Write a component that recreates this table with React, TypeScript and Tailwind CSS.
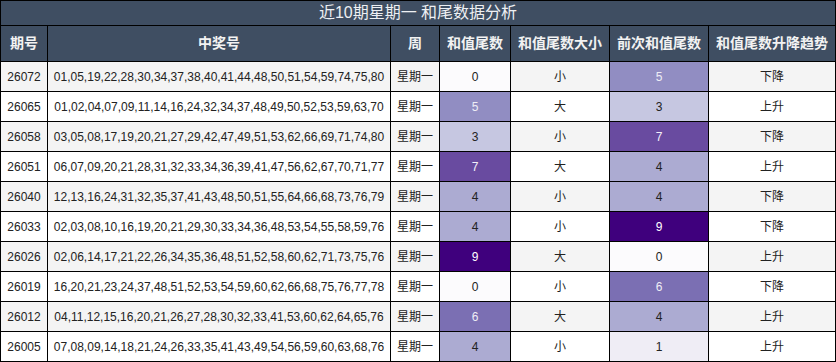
import React from "react";

// 近10期星期一 和值尾数 heatmap table

interface Row {
    issue: string;
    nums: string;
    tail: number;
    size: string;
    prev: number;
    trend: string;
}

const ROWS: Row[] = [
    { issue: "26072", nums: "01,05,19,22,28,30,34,37,38,40,41,44,48,50,51,54,59,74,75,80", tail: 0, size: "小", prev: 5, trend: "下降" },
    { issue: "26065", nums: "01,02,04,07,09,11,14,16,24,32,34,37,48,49,50,52,53,59,63,70", tail: 5, size: "大", prev: 3, trend: "上升" },
    { issue: "26058", nums: "03,05,08,17,19,20,21,27,29,42,47,49,51,53,62,66,69,71,74,80", tail: 3, size: "小", prev: 7, trend: "下降" },
    { issue: "26051", nums: "06,07,09,20,21,28,31,32,33,34,36,39,41,47,56,62,67,70,71,77", tail: 7, size: "大", prev: 4, trend: "上升" },
    { issue: "26040", nums: "12,13,16,24,31,32,35,37,41,43,48,50,51,55,64,66,68,73,76,79", tail: 4, size: "小", prev: 4, trend: "下降" },
    { issue: "26033", nums: "02,03,08,10,16,19,20,21,29,30,33,34,36,48,53,54,55,58,59,76", tail: 4, size: "小", prev: 9, trend: "下降" },
    { issue: "26026", nums: "02,06,14,17,21,22,26,34,35,36,48,51,52,58,60,62,71,73,75,76", tail: 9, size: "大", prev: 0, trend: "上升" },
    { issue: "26019", nums: "16,20,21,23,24,37,48,51,52,53,54,59,60,62,66,68,75,76,77,78", tail: 0, size: "小", prev: 6, trend: "下降" },
    { issue: "26012", nums: "04,11,12,15,16,20,21,26,27,28,30,32,33,41,53,60,62,64,65,76", tail: 6, size: "大", prev: 4, trend: "上升" },
    { issue: "26005", nums: "07,08,09,14,18,21,24,26,33,35,41,43,49,54,56,59,60,63,68,76", tail: 4, size: "小", prev: 1, trend: "上升" },
];

const HEADERS = ["期号", "中奖号", "周", "和值尾数", "和值尾数大小", "前次和值尾数", "和值尾数升降趋势"];

// Purples scale, one class per digit
const HEAT: Record<number, string> = {
    0: "bg-[#fcfbfd] text-[#222]",
    1: "bg-[#efedf5] text-[#222]",
    2: "bg-[#dadaeb] text-[#222]",
    3: "bg-[#c6c7e1] text-[#222]",
    4: "bg-[#acabd2] text-[#222]",
    5: "bg-[#918dc2] text-[#eeeef6]",
    6: "bg-[#7b6fb3] text-[#eeeef6]",
    7: "bg-[#694ba0] text-[#f4f0fa]",
    8: "bg-[#54278f] text-white",
    9: "bg-[#3f007d] text-white",
};

const FONT = "font-['Liberation_Sans','Noto_Sans_CJK_SC',sans-serif]";

export default function App() {
    return (
        <div className={`w-[836px] h-[362px] bg-white ${FONT}`}>
            <div className="grid grid-cols-[46px_342px_48px_70px_98px_98px_126px] gap-px bg-black p-px">
                <div className="col-span-7 h-[24px] bg-[#3f4e62] text-[#eef0f3] text-[16px] leading-[24px] text-center">
                    近10期星期一 和尾数据分析
                </div>

                {HEADERS.map((h, i) => (
                    <div key={i} className="h-[35px] bg-[#3f4e62] text-[#f2f2f2] text-[14px] font-bold flex items-center justify-center">
                        {h}
                    </div>
                ))}

                {ROWS.map((r, i) => {
                    const stripe = i % 2 === 0 ? "bg-[#f4f4f4]" : "bg-white";
                    const cell = "h-[29px] text-[12px] text-[#222] flex items-center justify-center";
                    return (
                        <React.Fragment key={r.issue}>
                            <div className={`${cell} ${stripe}`}>{r.issue}</div>
                            <div className={`${cell} ${stripe}`}>{r.nums}</div>
                            <div className={`${cell} ${stripe}`}>星期一</div>
                            <div className={`${cell} ${HEAT[r.tail]}`}>{r.tail}</div>
                            <div className={`${cell} ${stripe}`}>{r.size}</div>
                            <div className={`${cell} ${HEAT[r.prev]}`}>{r.prev}</div>
                            <div className={`${cell} ${stripe}`}>{r.trend}</div>
                        </React.Fragment>
                    );
                })}
            </div>
        </div>
    );
}
